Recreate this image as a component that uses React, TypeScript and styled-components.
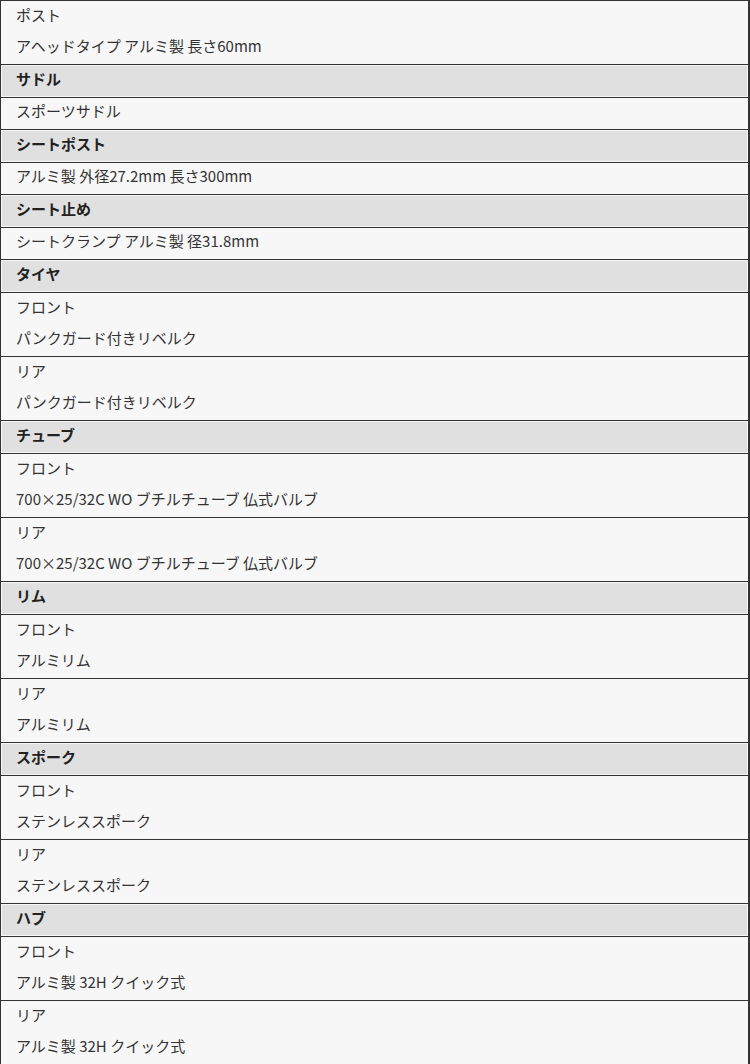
import React from "react";
import styled, { createGlobalStyle } from "styled-components";

const GlobalStyle = createGlobalStyle`
  html, body { margin: 0; padding: 0; background: #ffffff; }
  body {
    font-family: "Noto Sans CJK JP", "Noto Sans", sans-serif;
    color: #333333;
    font-size: 15px;
  }
`;

const Table = styled.div`
  width: 750px;
  box-sizing: border-box;
  border-left: 1px solid #333333;
  border-right: 2px solid #333333;
  border-bottom: 1px solid #333333;
  background: #f7f7f7;
  display: flex;
  flex-direction: column;
`;

const Heading = styled.div`
  border-top: 1px solid #333333;
  padding: 1px;
  background: #f7f7f7;
`;

const HeadingInner = styled.div`
  height: 30px;
  box-sizing: border-box;
  background: #e0e0e0;
  padding: 0 0 4px 14px;
  display: flex;
  align-items: center;
  font-weight: bold;
  font-size: 15px;
  line-height: 20px;
  color: #222222;
`;

const Item = styled.div`
  border-top: 1px solid #333333;
  display: flex;
  flex-direction: column;
`;

const Line = styled.div`
  height: 32px;
  box-sizing: border-box;
  padding: 0 0 5px 15px;
  display: flex;
  align-items: center;
  font-size: 15px;
  line-height: 20px;
  white-space: nowrap;
  &:last-child {
    height: 31px;
  }
`;

type Block =
  | { kind: "h"; text: string }
  | { kind: "i"; lines: string[] };

const blocks: Block[] = [
  { kind: "i", lines: ["ポスト", "アヘッドタイプ アルミ製 長さ60mm"] },
  { kind: "h", text: "サドル" },
  { kind: "i", lines: ["スポーツサドル"] },
  { kind: "h", text: "シートポスト" },
  { kind: "i", lines: ["アルミ製 外径27.2mm 長さ300mm"] },
  { kind: "h", text: "シート止め" },
  { kind: "i", lines: ["シートクランプ アルミ製 径31.8mm"] },
  { kind: "h", text: "タイヤ" },
  { kind: "i", lines: ["フロント", "パンクガード付きリベルク"] },
  { kind: "i", lines: ["リア", "パンクガード付きリベルク"] },
  { kind: "h", text: "チューブ" },
  { kind: "i", lines: ["フロント", "700×25/32C WO ブチルチューブ 仏式バルブ"] },
  { kind: "i", lines: ["リア", "700×25/32C WO ブチルチューブ 仏式バルブ"] },
  { kind: "h", text: "リム" },
  { kind: "i", lines: ["フロント", "アルミリム"] },
  { kind: "i", lines: ["リア", "アルミリム"] },
  { kind: "h", text: "スポーク" },
  { kind: "i", lines: ["フロント", "ステンレススポーク"] },
  { kind: "i", lines: ["リア", "ステンレススポーク"] },
  { kind: "h", text: "ハブ" },
  { kind: "i", lines: ["フロント", "アルミ製 32H クイック式"] },
  { kind: "i", lines: ["リア", "アルミ製 32H クイック式"] },
];

export default function App() {
  return (
    <>
      <GlobalStyle />
      <Table>
        {blocks.map((b, idx) =>
          b.kind === "h" ? (
            <Heading key={idx}>
              <HeadingInner>{b.text}</HeadingInner>
            </Heading>
          ) : (
            <Item key={idx}>
              {b.lines.map((l, j) => (
                <Line key={j}>{l}</Line>
              ))}
            </Item>
          )
        )}
      </Table>
    </>
  );
}
